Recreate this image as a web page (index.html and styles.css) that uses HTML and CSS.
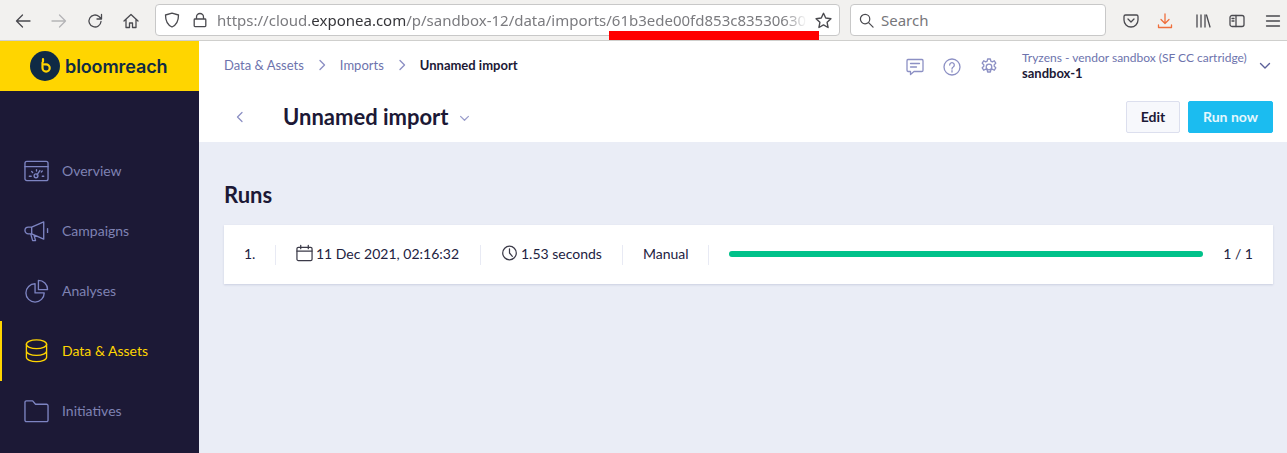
FILE: index.html
```html
<!DOCTYPE html>
<html lang="en">
<head>
<meta charset="utf-8">
<title>Unnamed import</title>
<link rel="stylesheet" href="styles.css">
</head>
<body>
<div class="browser">
  <div class="nav-btns">
    <svg class="ico" viewBox="0 0 16 16"><path d="M15 8H1.500M7.500 2 1.500 8l6 6"/></svg>
    <svg class="ico dim" viewBox="0 0 16 16"><path d="M1 8h13.500M8.500 2l6 6-6 6"/></svg>
    <svg class="ico" viewBox="0 0 16 16"><path d="M14 8.500A6 6 0 1 1 12 3.500L14.500 6M14.500 1.500V6H10"/></svg>
    <svg class="ico" viewBox="0 0 16 16"><path d="M1 8 8 1.500 15 8M3 6.500V14.500H6.500V10H9.500V14.500H13V6.500"/></svg>
  </div>
  <div class="urlbar">
    <svg class="ico shield" viewBox="0 0 16 16"><path d="M8 1.200 14.500 3C14.500 9 12.500 13 8 15 3.500 13 1.500 9 1.500 3Z"/></svg>
    <svg class="ico lock" viewBox="0 0 16 16"><path d="M4.500 7V5a3.500 3.500 0 0 1 7 0v2M3 7h10a.8.8 0 0 1 .8.8v6a.8.8 0 0 1-.8.8H3a.8.8 0 0 1-.8-.8v-6A.8.8 0 0 1 3 7Z"/></svg>
    <div class="url"><span>https://cloud.</span><b>exponea.com</b><span>/p/sandbox-12/data/imports/61b3ede00fd853c83530630</span></div>
    <svg class="ico star" viewBox="0 0 16 16"><path d="M8 1.200 10.100 5.700 15 6.300 11.400 9.700 12.300 14.600 8 12.200 3.700 14.600 4.600 9.700 1 6.300 5.900 5.700Z"/></svg>
    <div class="redact"></div>
  </div>
  <div class="searchbar">
    <svg class="ico" viewBox="0 0 16 16"><circle cx="6.500" cy="6.500" r="5"/><path d="M10.200 10.200 15 15"/></svg>
    <span>Search</span>
  </div>
  <div class="tools">
    <svg class="ico" viewBox="0 0 16 16"><path d="M2.500 2h11A1.500 1.500 0 0 1 15 3.500V7a7 7 0 0 1-14 0V3.500A1.500 1.500 0 0 1 2.500 2Z"/><path d="M5 6l3 3 3-3"/></svg>
    <svg class="ico orange" viewBox="0 0 16 16"><path d="M8 1v9M4 6.500l4 4 4-4M1.500 12v2.500h13V12"/></svg>
    <svg class="ico lib" viewBox="0 0 16 16"><path d="M2 2v12M6 2v12M10 2v12M11.500 2l3.500 12"/></svg>
    <svg class="ico" viewBox="0 0 16 16"><rect x="1" y="2.500" width="14" height="11" rx="2"/><path d="M7 2.500v11M3 5.500h2M3 8h2"/></svg>
    <svg class="ico menu-btn" viewBox="0 0 16 16"><path d="M1.500 3h13M1.500 8h13M1.500 13h13"/></svg>
  </div>
</div>
<div class="app">
  <aside class="sidebar">
    <div class="brand">
      <svg class="brand-mark" viewBox="0 0 30 30"><circle cx="15" cy="15" r="15" fill="#0f2a45"/><path d="M13 8v2.500M12.500 11.500v5.500a3.600 3.600 0 1 0 3.600-3.600h-1.600" fill="none" stroke="#ffd500" stroke-width="2.200"/></svg>
      <span class="brand-name">bloomreach</span>
    </div>
    <nav class="menu">
      <a class="menu-item">
        <svg class="menu-ico" viewBox="0 0 26 24"><rect x="1" y="2" width="24" height="20" rx="2"/><path d="M1 7.500h24M5.500 17.500H7.500M19 17.500h1.500M8 12.500l1 1M13 10.500v1.500M19 12l-1 1M16.500 11.500 13.500 16"/><circle cx="12.500" cy="17" r="2"/></svg>
        <span>Overview</span>
      </a>
      <a class="menu-item">
        <svg class="menu-ico" viewBox="0 0 26 24"><path d="M20.500 2.500 8 8H4.500a3.500 3.500 0 0 0 0 7H8l12.500 5.500ZM8 8v7M7 15l2 7h3l-1.500-5.500M24.500 9.500v4"/></svg>
        <span>Campaigns</span>
      </a>
      <a class="menu-item">
        <svg class="menu-ico" viewBox="0 0 26 24"><path d="M11.500 4.500A9.500 9.500 0 1 0 21 14H11.500Z"/><path d="M15 1a9.500 9.500 0 0 1 9.500 9.500H15Z"/></svg>
        <span>Analyses</span>
      </a>
      <a class="menu-item active">
        <svg class="menu-ico" viewBox="0 0 26 24"><ellipse cx="13" cy="5" rx="10.500" ry="4.500"/><path d="M2.500 5v13.500c0 2.500 4.700 4.500 10.500 4.500s10.500-2 10.500-4.500V5M2.500 12c0 2.500 4.700 4.500 10.500 4.500s10.500-2 10.500-4.500"/></svg>
        <span>Data &amp; Assets</span>
      </a>
      <a class="menu-item">
        <svg class="menu-ico" viewBox="0 0 26 24"><path d="M1 3a1.500 1.500 0 0 1 1.500-1.500H9L12 5h11.500A1.500 1.500 0 0 1 25 6.500v15a1.500 1.500 0 0 1-1.500 1.500h-21A1.500 1.500 0 0 1 1 21.500Z"/></svg>
        <span>Initiatives</span>
      </a>
    </nav>
  </aside>
  <main class="main">
    <header class="header">
      <div class="topbar">
        <div class="crumbs">
          <span>Data &amp; Assets</span>
          <svg class="chev-r" viewBox="0 0 8 12"><path d="M2 1.500 6.500 6 2 10.500"/></svg>
          <span>Imports</span>
          <svg class="chev-r" viewBox="0 0 8 12"><path d="M2 1.500 6.500 6 2 10.500"/></svg>
          <b>Unnamed import</b>
        </div>
        <div class="top-icons">
          <svg class="top-ico" viewBox="0 0 18 18"><path d="M2 1.500h14A1.200 1.200 0 0 1 17 2.700v9.600a1.200 1.200 0 0 1-1.200 1.200H8L4.500 16.500v-3H2A1.200 1.200 0 0 1 1 12.300V2.700A1.200 1.200 0 0 1 2 1.500ZM4.500 5.500h9M4.500 9h6"/></svg>
          <svg class="top-ico" viewBox="0 0 18 18"><circle cx="9" cy="9" r="8"/><path d="M6.700 7a2.300 2.300 0 1 1 3.500 2c-.9.500-1.200 1-1.200 2M9 12.700v1.300"/></svg>
          <svg class="top-ico" viewBox="0 0 18 18"><circle cx="9" cy="9" r="2.800"/><path d="M7.600 1h2.800l.4 2.200 1.500.7 2-1.100 1.500 2.400-1.600 1.500v1.600l1.600 1.500-1.500 2.400-2-1.100-1.500.7-.4 2.200H7.600l-.4-2.200-1.500-.7-2 1.100-1.500-2.400 1.600-1.500V6.700L2.200 5.200l1.500-2.400 2 1.100 1.500-.7Z"/></svg>
        </div>
        <div class="account">
          <div class="account-text">
            <span class="org">Tryzens - vendor sandbox (SF CC cartridge)</span>
            <b class="proj">sandbox-1</b>
          </div>
          <svg class="chev-d" viewBox="0 0 12 8"><path d="M1.500 1.500 6 6l4.500-4.500"/></svg>
        </div>
      </div>
      <div class="titlebar">
        <svg class="back" viewBox="0 0 8 12"><path d="M6 1.500 1.500 6 6 10.500"/></svg>
        <h1>Unnamed import</h1>
        <svg class="chev-d title-chev" viewBox="0 0 12 8"><path d="M1.500 1.500 6 6l4.500-4.500"/></svg>
        <div class="actions">
          <button class="btn">Edit</button>
          <button class="btn primary">Run now</button>
        </div>
      </div>
    </header>
    <section class="content">
      <h2>Runs</h2>
      <div class="run">
        <div class="cell num">1.</div>
        <div class="cell date">
          <svg class="run-ico" viewBox="0 0 18 18"><rect x="1" y="3" width="16" height="14" rx="1.500"/><path d="M1 7h16M5 .8V4.500M13 .8V4.500"/></svg>
          <span>11 Dec 2021, 02:16:32</span>
        </div>
        <div class="cell dur">
          <svg class="run-ico" viewBox="0 0 18 18"><circle cx="9" cy="9" r="7.200"/><path d="M9 4.500V9l3 3.500"/></svg>
          <span>1.53 seconds</span>
        </div>
        <div class="cell kind">Manual</div>
        <div class="progress"><div class="bar"></div></div>
        <div class="count">1 / 1</div>
      </div>
    </section>
  </main>
</div>
</body>
</html>
```
FILE: styles.css
```css
* { box-sizing: border-box; }
html, body { margin: 0; height: 100%; }
body {
  width: 1287px;
  height: 453px;
  overflow: hidden;
  font-family: Lato, "Liberation Sans", sans-serif;
  background: #eaedf6;
  display: flex;
  flex-direction: column;
}
svg { display: block; flex: none; fill: none; stroke-linecap: round; stroke-linejoin: round; }

/* browser chrome */
.browser {
  height: 41px;
  flex: none;
  background: #f2f1ef;
  border-bottom: 1px solid #cfcfcd;
  display: flex;
  align-items: flex-start;
  padding-top: 4px;
}
.ico { width: 16px; height: 16px; stroke: #4a4a4f; stroke-width: 1.300; }
.ico.dim { stroke: #b5b5b7; }
.ico.orange { stroke: #ef6f3c; }
.nav-btns {
  display: flex;
  width: 155px;
  padding: 9px 0 0 15px;
  gap: 20px;
}
.urlbar {
  position: relative;
  width: 685px;
  height: 32px;
  background: #fff;
  border: 1px solid #c8c8c8;
  border-radius: 4px;
  display: flex;
  align-items: center;
  padding-left: 8px;
}
.shield { margin-right: 12px; }
.lock { margin-right: 9px; }
.url {
  font-family: "Noto Sans", sans-serif;
  font-size: 15px;
  color: #7b7b7f;
  white-space: nowrap;
  width: 590px;
  overflow: hidden;
  -webkit-mask-image: linear-gradient(90deg, #000 96%, transparent);
  mask-image: linear-gradient(90deg, #000 96%, transparent);
}
.url b { font-weight: 400; color: #36363a; }
.star { position: absolute; right: 7px; top: 7px; width: 17px; height: 17px; }
.redact {
  position: absolute;
  left: 453px;
  top: 26px;
  width: 210px;
  height: 9px;
  background: #ff0000;
}
.searchbar {
  width: 256px;
  height: 32px;
  margin-left: 10px;
  background: #fff;
  border: 1px solid #c8c8c8;
  border-radius: 4px;
  display: flex;
  align-items: center;
  gap: 7px;
  padding-left: 8px;
  font-family: "Noto Sans", sans-serif;
  font-size: 15px;
  color: #77777b;
}
.searchbar .ico { width: 15px; height: 15px; }
.tools {
  display: flex;
  gap: 18px;
  padding: 9px 0 0 17px;
}
.lib { margin-left: 4px; }
.menu-btn { margin-left: 2px; }

/* app */
.app { flex: 1; display: flex; min-height: 0; }
.sidebar { width: 199px; flex: none; background: #1c1936; }
.brand {
  height: 50px;
  background: #ffd500;
  display: flex;
  align-items: center;
  padding-left: 30px;
  gap: 5px;
}
.brand-mark { width: 30px; height: 30px; }
.brand-name { font: 600 18px Inter, sans-serif; color: #0f2a45; letter-spacing: -.1px; }
.menu { padding-top: 50px; }
.menu-item {
  height: 60px;
  display: flex;
  align-items: center;
  padding-left: 24px;
  gap: 13px;
  font-size: 14px;
  color: #7f82b3;
}
.menu-item span { padding-bottom: 2px; }
.menu-item.active { color: #ffd500; box-shadow: inset 2px 0 0 #ffd500; }
.menu-ico { width: 25px; height: 24px; stroke: #7d84c2; stroke-width: 1.400; }
.active .menu-ico { stroke: #ffd500; }

.main { flex: 1; min-width: 0; display: flex; flex-direction: column; }
.header { background: #fff; height: 101px; flex: none; padding: 0 14px 0 25px; }
.topbar { height: 50px; display: flex; align-items: center; }
.crumbs { display: flex; align-items: center; font-size: 13px; color: #6d73ad; width: 682px; padding-bottom: 3px; }
.crumbs b { color: #1c1936; font-weight: 700; }
.chev-r { width: 8px; height: 12px; stroke: #8c90c4; stroke-width: 1.400; margin: 0 14px; }
.top-icons { display: flex; gap: 19px; width: 116px; padding-top: 2px; }
.top-ico { width: 18px; height: 18px; stroke: #8c90c4; stroke-width: 1.300; }
.account { display: flex; align-items: center; flex: 1; }
.account-text { display: flex; flex-direction: column; width: 237px; }
.org { font-size: 12px; line-height: 15px; color: #6d73ad; white-space: nowrap; }
.proj { font-size: 13px; line-height: 17px; color: #1c1936; }
.chev-d { width: 12px; height: 8px; stroke: #5b6099; stroke-width: 1.400; }
.titlebar { height: 51px; display: flex; align-items: center; }
.back { width: 8px; height: 12px; stroke: #8c90c4; stroke-width: 1.300; margin-left: 12px; }
h1 { margin: 0 10px 0 39px; font-size: 22px; font-weight: 700; color: #1c1936; white-space: nowrap; }
.title-chev { width: 11px; height: 7px; stroke: #9a9dcb; margin-top: 3px; }
.actions { margin-left: auto; display: flex; gap: 8px; }
.btn {
  height: 32px;
  font: 700 14px Lato, sans-serif;
  border: 1px solid #dcdfee;
  background: #f7f8fc;
  color: #1c1936;
  border-radius: 2px;
  padding: 0;
  width: 54px;
}
.btn.primary { background: #1bbcf0; border-color: #1bbcf0; color: #e4f7fd; width: 85px; }

.content { flex: 1; padding: 0 14px 0 25px; }
h2 { margin: 40px 0 17px; font-size: 22px; line-height: 26px; font-weight: 700; color: #1c1936; }
.run {
  height: 59px;
  background: #fff;
  box-shadow: 0 1px 2px rgba(60, 70, 130, .18);
  display: flex;
  align-items: center;
  font-size: 14px;
  color: #22223f;
}
.cell {
  height: 20px;
  padding-bottom: 3px;
  display: flex;
  align-items: center;
  gap: 3px;
  border-right: 1px solid #e8eaf4;
  white-space: nowrap;
}
.num { width: 52px; padding-left: 20px; }
.date { width: 205px; padding-left: 20px; }
.dur { width: 142px; padding-left: 20px; }
.kind { width: 86px; padding-left: 20px; }
.run-ico { width: 17px; height: 18px; stroke: #3b3a48; stroke-width: 1.300; }
.progress { flex: 1; margin: 0 0 1px 20px; height: 6px; background: #e8eaf4; border-radius: 3px; }
.bar { height: 100%; width: 100%; border-radius: 3px; background: #00c28a; }
.count { width: 70px; padding: 0 20px 3px 0; text-align: right; }
```
